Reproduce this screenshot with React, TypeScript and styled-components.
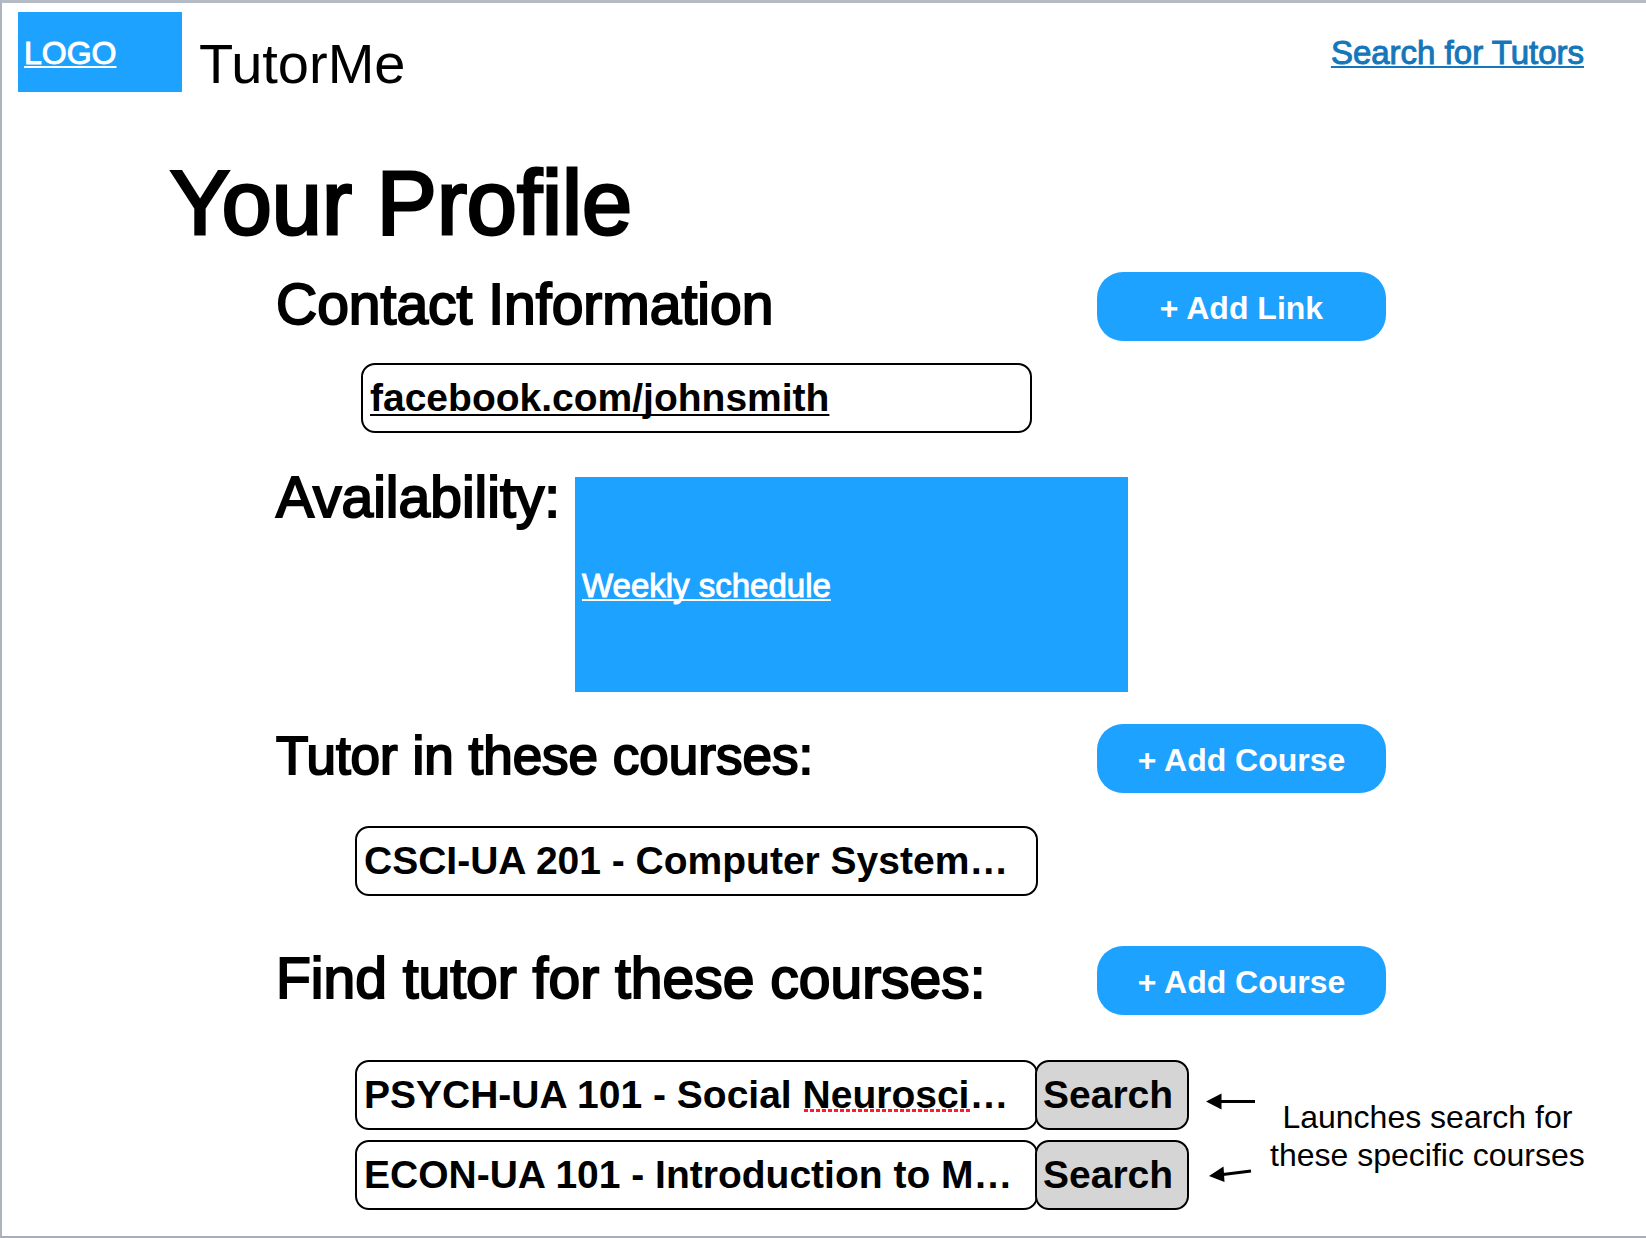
import React from "react";
import styled, { createGlobalStyle } from "styled-components";

const BLUE = "#1ea2ff";

const GlobalStyle = createGlobalStyle`
  *, *::before, *::after { box-sizing: border-box; }
  body {
    margin: 0;
    background: #fff;
    color: #000;
    font-family: "Liberation Sans", Arial, Helvetica, sans-serif;
  }
`;

const Page = styled.div`
  min-height: 100vh;
  padding-bottom: 26px;
  border-top: 3px solid #b4bbc4;
  border-left: 2px solid #adb3bf;
  border-bottom: 2px solid #a8adb9;
  overflow-x: hidden;
`;

const Header = styled.header`
  display: flex;
  align-items: center;
  gap: 17px;
  padding: 9px 62px 0 16px;
`;

const TextLink = styled.a<{ $color: string; $size?: number }>`
  padding-top: 2px;
  color: ${(p) => p.$color};
  font-size: ${(p) => p.$size ?? 33}px;
  line-height: 38px;
  -webkit-text-stroke: 1px ${(p) => p.$color};
  text-decoration: underline;
  text-decoration-thickness: 2px;
  text-decoration-skip-ink: none;
  text-underline-offset: 2px;
`;

const LogoBox = styled.div`
  display: flex;
  align-items: center;
  width: 164px;
  height: 80px;
  padding: 0 6px;
  background: ${BLUE};
`;

const Brand = styled.span`
  align-self: flex-end;
  font-size: 56px;
  line-height: 56px;
`;

const Nav = styled.nav`
  display: flex;
  margin-left: auto;
`;

const Title = styled.h1`
  margin: 63px 0 21px 168px;
  font-size: 90px;
  font-weight: 400;
  line-height: 96px;
  -webkit-text-stroke: 3px #000;
`;

const Section = styled.section<{ $top: number }>`
  margin-top: ${(p) => p.$top}px;
  padding-left: 274px;
`;

const SectionHead = styled.div`
  display: flex;
  align-items: flex-start;
  justify-content: space-between;
  gap: 24px;
  padding-right: 260px;
`;

const Heading = styled.h2<{ $size?: number; $line?: number }>`
  margin: 0;
  font-size: ${(p) => p.$size ?? 57}px;
  font-weight: 400;
  line-height: ${(p) => p.$line ?? 64}px;
  -webkit-text-stroke: 2px #000;
`;

const AddButton = styled.button`
  flex: none;
  width: 289px;
  height: 69px;
  padding: 3px 0 0;
  border: 0;
  border-radius: 26px;
  background: ${BLUE};
  color: #fff;
  font: bold 32px "Liberation Sans", Arial, sans-serif;
  cursor: pointer;
`;

const Row = styled.div<{ $top: number; $indent: number }>`
  display: flex;
  margin-top: ${(p) => p.$top}px;
  padding-left: ${(p) => p.$indent}px;
`;

const FieldWrap = styled.div<{ $width: number }>`
  position: relative;
  flex: 0 1 ${(p) => p.$width}px;
  min-width: 0;
`;

const Field = styled.input<{ $link?: boolean }>`
  display: block;
  width: 100%;
  height: 70px;
  padding: 0 7px;
  border: 2px solid #000;
  border-radius: 14px;
  background: #fff;
  color: #000;
  font: bold 39px "Liberation Sans", Arial, sans-serif;
  text-overflow: ellipsis;
  text-decoration: ${(p) => (p.$link ? "underline 2px" : "none")};
  text-decoration-skip-ink: none;
  text-underline-offset: 3px;
`;

const SpellingMark = styled.span`
  position: absolute;
  left: 449px;
  top: 49px;
  width: 166px;
  height: 3px;
  background: repeating-linear-gradient(90deg, #ff1a2e 0 4px, transparent 4px 6px);
  pointer-events: none;
`;

const SearchButton = styled.button`
  flex: none;
  width: 154px;
  height: 70px;
  margin-left: -3px;
  padding: 0 6px;
  border: 2px solid #000;
  border-radius: 14px;
  background: #d5d5d5;
  color: #000;
  font: bold 39px "Liberation Sans", Arial, sans-serif;
  text-align: left;
  position: relative;
  cursor: pointer;
`;

const Schedule = styled.div`
  display: grid;
  grid-template-columns: 299px minmax(0, 553px);
  align-items: start;
`;

const ScheduleBox = styled.div`
  display: flex;
  align-items: center;
  height: 215px;
  padding: 0 7px;
  background: ${BLUE};
`;

const CourseList = styled.div`
  display: flex;
  flex-direction: column;
  flex: 0 1 834px;
  min-width: 0;
  gap: 10px;
`;

const CourseRow = styled.div`
  display: flex;
`;

const Callout = styled.aside`
  display: flex;
  align-items: center;
  flex: none;
  gap: 14px;
  margin-left: 17px;
`;

const Note = styled.p`
  margin: 0;
  padding-top: 2px;
  font-size: 32px;
  line-height: 38px;
  text-align: center;
  white-space: nowrap;
`;

function Arrows() {
  return (
    <svg width="50" height="150" viewBox="0 0 50 150" aria-hidden="true">
      <path d="M14 41.5H49" stroke="#000" strokeWidth="3" />
      <path d="M0 41.5L15.500 33.500V49.500Z" />
      <path d="M17 114.500L45 111" stroke="#000" strokeWidth="3" />
      <path d="M3 116L17.500 106.500L18.500 122Z" />
    </svg>
  );
}

type Wanted = { name: string; misspelt?: boolean };

const wanted: Wanted[] = [
  { name: "PSYCH-UA 101 - Social Neurosci…", misspelt: true },
  { name: "ECON-UA 101 - Introduction to M…" },
];

export default function App() {
  return (
    <>
      <GlobalStyle />
      <Page>
        <Header>
          <LogoBox>
            <TextLink href="#home" $color="#fff" $size={32}>LOGO</TextLink>
          </LogoBox>
          <Brand>TutorMe</Brand>
          <Nav>
            <TextLink href="#tutors" $color="#1577b9">Search for Tutors</TextLink>
          </Nav>
        </Header>

        <main>
          <Title>Your Profile</Title>

          <Section $top={0}>
            <SectionHead>
              <Heading id="contact">Contact Information</Heading>
              <AddButton type="button">+ Add Link</AddButton>
            </SectionHead>
            <Row $top={22} $indent={85}>
              <FieldWrap $width={671}>
                <Field
                  $link
                  type="text"
                  aria-labelledby="contact"
                  spellCheck={false}
                  defaultValue="facebook.com/johnsmith"
                />
              </FieldWrap>
            </Row>
          </Section>

          <Section $top={44}>
            <Schedule>
              <Heading $line={40}>Availability:</Heading>
              <ScheduleBox>
                <TextLink href="#schedule" $color="#fff">Weekly schedule</TextLink>
              </ScheduleBox>
            </Schedule>
          </Section>

          <Section $top={32}>
            <SectionHead>
              <Heading id="teaching" $size={53}>Tutor in these courses:</Heading>
              <AddButton type="button">+ Add Course</AddButton>
            </SectionHead>
            <Row $top={33} $indent={79}>
              <FieldWrap $width={683}>
                <Field
                  type="text"
                  aria-labelledby="teaching"
                  spellCheck={false}
                  defaultValue="CSCI-UA 201 - Computer System…"
                />
              </FieldWrap>
            </Row>
          </Section>

          <Section $top={50}>
            <SectionHead>
              <Heading id="wanted">Find tutor for these courses:</Heading>
              <AddButton type="button">+ Add Course</AddButton>
            </SectionHead>
            <Row $top={45} $indent={79}>
              <CourseList>
                {wanted.map((course) => (
                  <CourseRow key={course.name}>
                    <FieldWrap $width={683}>
                      <Field
                        type="text"
                        aria-labelledby="wanted"
                        spellCheck={false}
                        defaultValue={course.name}
                      />
                      {course.misspelt && <SpellingMark />}
                    </FieldWrap>
                    <SearchButton type="button">Search</SearchButton>
                  </CourseRow>
                ))}
              </CourseList>
              <Callout>
                <Arrows />
                <Note>
                  Launches search for
                  <br />
                  these specific courses
                </Note>
              </Callout>
            </Row>
          </Section>
        </main>
      </Page>
    </>
  );
}
